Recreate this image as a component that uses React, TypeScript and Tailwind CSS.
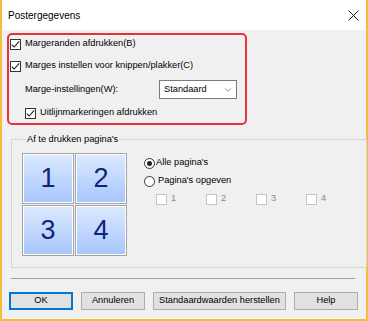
import { ChevronDown } from "lucide-react";

const font = { fontFamily: '"Liberation Sans", Arial, sans-serif' };

function Check({ checked = false, disabled = false }: { checked?: boolean; disabled?: boolean }) {
  return (
    <span
      className={`flex h-[11px] w-[11px] shrink-0 items-center justify-center border bg-white ${
        disabled ? "border-[#c4c4c4]" : "border-[#333333]"
      }`}
    >
      {checked ? (
        <svg width="9" height="9" viewBox="0 0 9 9" fill="none">
          <path d="M0.8 4.6 L3.2 7 L8.2 1.4" stroke="#222" strokeWidth="1.1" />
        </svg>
      ) : null}
    </span>
  );
}

function Radio({ checked = false }: { checked?: boolean }) {
  return (
    <span className="flex h-[11px] w-[11px] shrink-0 items-center justify-center rounded-full border border-[#333333] bg-white">
      {checked ? <span className="h-[5px] w-[5px] rounded-full bg-[#222]" /> : null}
    </span>
  );
}

function Tile({ n }: { n: number }) {
  return (
    <div className="flex h-[51px] w-[52px] items-center justify-center border border-[#a3a3a3] bg-white p-[1px]">
      <div className="flex h-full w-full items-center justify-center bg-gradient-to-b from-[#dbe9ff] to-[#a7c6fc] text-[27px] text-[#14237a]">
        {n}
      </div>
    </div>
  );
}

function Button({ label, w, primary = false }: { label: string; w: string; primary?: boolean }) {
  return (
    <button
      className={`flex h-[18px] items-center justify-center whitespace-nowrap bg-[#e1e1e1] text-[9.25px] text-black ${w} ${
        primary ? "border-2 border-[#0078d7]" : "border border-[#adadad]"
      }`}
    >
      {label}
    </button>
  );
}

export default function App() {
  return (
    <div style={font} className="flex h-[321px] w-[368px] flex-col border-x-2 border-b-2 border-[#f2bd3f] bg-[#f0f0f0] text-[9.25px] text-black">
      <div className="flex h-[30px] shrink-0 items-center justify-between bg-white pl-[6px] pr-[7px]">
        <span className="text-[10px]">Postergegevens</span>
        <svg width="11" height="11" viewBox="0 0 11 11" fill="none">
          <path d="M0.5 0.5 L10.5 10.5 M10.5 0.5 L0.5 10.5" stroke="#111" strokeWidth="1" />
        </svg>
      </div>

      <div className="ml-[5px] mt-[3px] flex h-[92px] w-[240px] flex-col gap-[4px] rounded-[5px] border-2 border-[#e5323b] pl-[1px]">
        <div className="flex h-[18px] items-center gap-[4px]">
          <Check checked />
          <span>Margeranden afdrukken(B)</span>
        </div>
        <div className="flex h-[18px] items-center gap-[4px]">
          <Check checked />
          <span>Marges instellen voor knippen/plakker(C)</span>
        </div>
        <div className="flex h-[21px] items-center pl-[15px]">
          <span className="w-[134px]">Marge-instellingen(W):</span>
          <div className="flex h-[19px] w-[78px] items-center justify-between border border-[#7a7a7a] bg-white pl-[4px] pr-[3px]">
            <span>Standaard</span>
            <ChevronDown size={10} strokeWidth={1.5} color="#444" />
          </div>
        </div>
        <div className="flex h-[18px] items-center gap-[4px] pl-[15px]">
          <Check checked />
          <span>Uitlijnmarkeringen afdrukken</span>
        </div>
      </div>

      <fieldset className="ml-[9px] mt-[8px] h-[135px] w-[346px] border border-[#d5d5d5] px-[10px] pt-[8px]">
        <legend className="ml-[4px] px-[1px] leading-[12px]">Af te drukken pagina's</legend>
        <div className="flex gap-[17px]">
          <div className="grid grid-cols-[52px_52px] gap-[1px]">
            <Tile n={1} />
            <Tile n={2} />
            <Tile n={3} />
            <Tile n={4} />
          </div>
          <div className="flex flex-col pt-[1px]">
            <div className="flex h-[18px] items-center gap-[1px]">
              <Radio checked />
              <span>Alle pagina's</span>
            </div>
            <div className="flex h-[18px] items-center gap-[3px]">
              <Radio />
              <span>Pagina's opgeven</span>
            </div>
            <div className="flex h-[18px] items-center pl-[12px]">
              {[1, 2, 3, 4].map((n) => (
                <div key={n} className="flex w-[50px] items-center gap-[4px] text-[#8a8a8a]">
                  <Check disabled />
                  <span>{n}</span>
                </div>
              ))}
            </div>
          </div>
        </div>
      </fieldset>

      <div className="ml-[9px] mt-[10px] h-[1px] w-[344px] bg-[#a0a0a0]" />

      <div className="ml-[7px] mt-[13px] flex gap-[8px]">
        <Button label="OK" w="w-[64px]" primary />
        <Button label="Annuleren" w="w-[64px]" />
        <Button label="Standaardwaarden herstellen" w="w-[133px]" />
        <Button label="Help" w="w-[64px]" />
      </div>
    </div>
  );
}
